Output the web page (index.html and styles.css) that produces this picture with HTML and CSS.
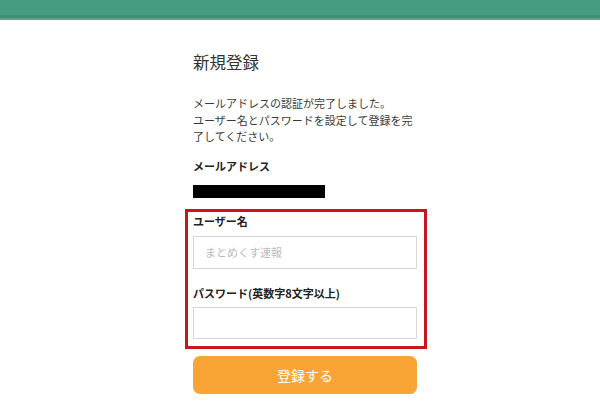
FILE: index.html
```html
<!DOCTYPE html>
<html lang="ja">
<head>
    <meta charset="UTF-8">
    <meta name="viewport" content="width=device-width, initial-scale=1.0">
    <title>新規登録</title>
    <link rel="stylesheet" href="styles.css">
</head>
<body>
    <header class="top-bar"></header>

    <main class="signup">
        <h2 class="signup-title">新規登録</h2>
        <p class="signup-lead">メールアドレスの認証が完了しました。<br>ユーザー名とパスワードを設定して登録を完了してください。</p>

        <div class="field-label label-email">メールアドレス</div>
        <div class="masked-email"></div>

        <form class="signup-form" action="/register" method="POST">
            <div class="highlight-box">
                <label class="field-label" for="username">ユーザー名</label>
                <input class="text-input" type="text" id="username" name="username" placeholder="まとめくす速報">

                <label class="field-label label-password" for="password">パスワード(英数字8文字以上)</label>
                <input class="text-input input-password" type="password" id="password" name="password">
            </div>

            <button type="submit" class="submit-btn">登録する</button>
        </form>
    </main>
</body>
</html>
```

FILE: styles.css
```css
/* Reset & Base Styles */
* {
    box-sizing: border-box;
    margin: 0;
    padding: 0;
}

body {
    background: #ffffff;
    color: #333;
    font-family: "Noto Sans CJK JP", "Noto Sans", sans-serif;
    padding-left: 10px;
}

/* Header bar */
.top-bar {
    height: 20px;
    margin-left: -10px;
    background-color: #469c83;
    border-bottom: 2px solid #5aa38d;
    box-shadow: inset 0 -3px 0 #3f8d76;
}

/* Signup column */
.signup {
    width: 224px;
    margin: 0 auto;
}

.signup-title {
    margin-top: 30px;
    font-size: 16.5px;
    line-height: 24px;
    font-weight: normal;
    color: #333;
}

.signup-lead {
    margin-top: 21px;
    font-size: 11px;
    line-height: 16.5px;
    color: #3a3a3a;
}

.field-label {
    display: block;
    margin-top: 14px;
    font-size: 11px;
    line-height: 18px;
    font-weight: bold;
    color: #222;
}

.label-email {
    margin-top: 12px;
}

.masked-email {
    width: 132px;
    height: 13px;
    margin-top: 10px;
    background: #000;
}

/* Highlighted inputs */
.highlight-box {
    margin: 11px -10px 0 -8px;
    padding: 0 7px 7px 5px;
    border: 3px solid #c8161e;
}

.highlight-box .field-label:first-child {
    margin-top: 0;
}

.text-input {
    display: block;
    width: 100%;
    height: 33px;
    margin-top: 6px;
    padding: 0 11px;
    border: 1px solid #d6d6d6;
    font-family: inherit;
    font-size: 11px;
    color: #333;
    outline: none;
}

.text-input::placeholder {
    color: #bbb;
}

.label-password {
    margin-top: 15px;
}

.input-password {
    height: 32px;
    margin-top: 5px;
}

/* Submit Button */
.submit-btn {
    display: block;
    width: 100%;
    height: 38px;
    margin-top: 7px;
    background-color: #f9a535;
    color: #fff;
    border: none;
    border-radius: 7px;
    font-family: inherit;
    font-size: 14px;
    cursor: pointer;
}
```
